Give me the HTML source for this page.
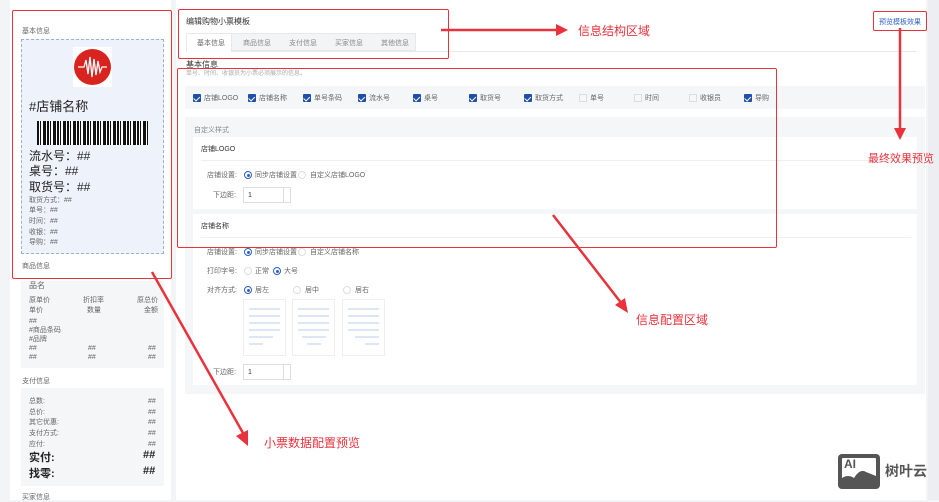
<!DOCTYPE html><html><head><meta charset="utf-8"><style>
*{margin:0;padding:0;box-sizing:border-box}
body{width:939px;height:500px;overflow:hidden;background:#f3f4f6;font-family:"Liberation Sans","Noto Sans CJK SC",sans-serif;position:relative;color:#333}
.a{position:absolute;white-space:nowrap}
.s7{font-size:7px;color:#666;line-height:9px}
.cb{position:absolute;width:8px;height:8px;background:#1f4fa8;border-radius:1px}
.cb::after{content:"";position:absolute;left:2px;top:0.5px;width:2.5px;height:4.5px;border:solid #fff;border-width:0 1.2px 1.2px 0;transform:rotate(45deg)}
.cbg{position:absolute;width:8px;height:8px;border:1px solid #ddd;background:#f7f7f7}
.rd{position:absolute;width:8px;height:8px;border-radius:50%;border:1px solid #2d5fc4}
.rd::after{content:"";position:absolute;left:1.5px;top:1.5px;width:3px;height:3px;border-radius:50%;background:#2d5fc4}
.ro{position:absolute;width:8px;height:8px;border-radius:50%;border:1px solid #ddd}
.red{position:absolute;border:1.5px solid #e8323c;border-radius:2px}
.rt{position:absolute;color:#e8323c;font-size:12px;white-space:nowrap}
.inp{position:absolute;width:48px;height:16px;border:1px solid #ddd;background:#fff;font-size:7px;padding:4px 0 0 4px}
.inp::after{content:"";position:absolute;right:0;top:0;width:6px;height:14px;border-left:1px solid #ddd}
.al{position:absolute;width:43px;height:57px;border:1px solid #eceef2;background:#fff}
.al i{position:absolute;height:2px;background:#dde6f5}
</style></head><body>
<div class="a" style="left:10px;top:0;width:161px;height:500px;background:#fff"></div>
<div class="a s7" style="left:22px;top:27px">基本信息</div>
<div class="a" style="left:21px;top:39px;width:143px;height:215px;background:#eef2fa;border:1px dashed #9bb0d4"></div>
<div class="a" style="left:73px;top:47px;width:39px;height:40px;background:#fff"></div>
<div class="a" style="left:74px;top:49px;width:37px;height:36px;border-radius:50%;background:#d8231f"></div>
<svg class="a" style="left:76px;top:54px" width="33" height="26"><path d="M2 13 L8 13 L10 6 L12 20 L14 3 L16 23 L18 5 L20 21 L22 7 L24 18 L26 13 L31 13" stroke="#fff" stroke-width="1.3" fill="none"/></svg>
<div class="a" style="left:29px;top:96px;font-size:13px;color:#222">#店铺名称</div>
<div class="a" style="left:37px;top:121px;width:111px;height:24px;background:repeating-linear-gradient(90deg,#111 0 2px,#fff 2px 3px,#111 3px 4px,#fff 4px 6px,#111 6px 9px,#fff 9px 10px)"></div>
<div class="a" style="left:29px;top:147px;font-size:12px;color:#222">流水号：##</div>
<div class="a" style="left:29px;top:162px;font-size:12px;color:#222">桌号：##</div>
<div class="a" style="left:29px;top:178px;font-size:12px;color:#222">取货号：##</div>
<div class="a s7" style="left:29px;top:196px">取货方式：##</div>
<div class="a s7" style="left:29px;top:206px">单号：##</div>
<div class="a s7" style="left:29px;top:217px">时间：##</div>
<div class="a s7" style="left:29px;top:228px">收银：##</div>
<div class="a s7" style="left:29px;top:238px">导购：##</div>
<div class="a s7" style="left:22px;top:262px">商品信息</div>
<div class="a" style="left:21px;top:281px;width:143px;height:87px;background:#f5f6f8"></div>
<div class="a s7" style="left:29px;top:281px;font-size:8px;line-height:10px">品名</div>
<div class="a s7" style="left:29px;top:296px">原单价</div><div class="a s7" style="left:83px;top:296px">折扣率</div><div class="a s7" style="left:137px;top:296px">原总价</div>
<div class="a s7" style="left:29px;top:306px">单价</div><div class="a s7" style="left:87px;top:306px">数量</div><div class="a s7" style="left:144px;top:306px">金额</div>
<div class="a s7" style="left:29px;top:317px">##</div>
<div class="a s7" style="left:29px;top:326px">#商品条码</div>
<div class="a s7" style="left:29px;top:335px">#品牌</div>
<div class="a s7" style="left:29px;top:344px">##</div><div class="a s7" style="left:88px;top:344px">##</div><div class="a s7" style="left:148px;top:344px">##</div>
<div class="a s7" style="left:29px;top:353px">##</div><div class="a s7" style="left:88px;top:353px">##</div><div class="a s7" style="left:148px;top:353px">##</div>
<div class="a s7" style="left:22px;top:377px">支付信息</div>
<div class="a" style="left:21px;top:388px;width:143px;height:98px;background:#f5f6f8"></div>
<div class="a s7" style="left:29px;top:397px">总数:</div><div class="a s7" style="left:148px;top:397px">##</div>
<div class="a s7" style="left:29px;top:408px">总价:</div><div class="a s7" style="left:148px;top:408px">##</div>
<div class="a s7" style="left:29px;top:418px">其它优惠:</div><div class="a s7" style="left:148px;top:418px">##</div>
<div class="a s7" style="left:29px;top:429px">支付方式:</div><div class="a s7" style="left:148px;top:429px">##</div>
<div class="a s7" style="left:29px;top:440px">应付:</div><div class="a s7" style="left:148px;top:440px">##</div>
<div class="a" style="left:29px;top:449px;font-size:11px;font-weight:bold;color:#222">实付:</div><div class="a" style="left:143px;top:449px;font-size:11px;font-weight:bold;color:#222">##</div>
<div class="a" style="left:29px;top:465px;font-size:11px;font-weight:bold;color:#222">找零:</div><div class="a" style="left:143px;top:465px;font-size:11px;font-weight:bold;color:#222">##</div>
<div class="a s7" style="left:22px;top:493px">买家信息</div>
<div class="a" style="left:176px;top:0;width:750px;height:500px;background:#fff"></div>
<div class="a" style="left:928px;top:0;width:11px;height:500px;background:#eceef1"></div>
<div class="a" style="left:186px;top:16px;font-size:8px;color:#333">编辑购物小票模板</div>
<div class="a" style="left:186px;top:51px;width:730px;height:1px;background:#e8e8e8"></div>
<div class="a" style="left:186px;top:33px;width:230px;height:18px;background:#f3f4f6;border:1px solid #e8e8e8"></div>
<div class="a" style="left:186px;top:33px;width:46px;height:19px;background:#fff;border:1px solid #e8e8e8;border-bottom:none"></div>
<div class="a s7" style="left:197px;top:39px">基本信息</div>
<div class="a s7" style="left:243px;top:39px;color:#888">商品信息</div>
<div class="a s7" style="left:289px;top:39px;color:#888">支付信息</div>
<div class="a s7" style="left:335px;top:39px;color:#888">买家信息</div>
<div class="a s7" style="left:381px;top:39px;color:#888">其他信息</div>
<div class="a" style="left:873px;top:11px;width:54px;height:20px;border:1.5px solid #e8323c;border-radius:2px;font-size:7px;color:#2d5fc4;text-align:center;padding-top:5px">预览模板效果</div>
<div class="a" style="left:186px;top:59px;font-size:8px;color:#333">基本信息</div>
<div class="a s7" style="left:186px;top:70px;font-size:6px;color:#aaa">单号、时间、收银员为小票必须展示的信息。</div>
<div class="a" style="left:185px;top:86px;width:740px;height:23px;background:#f5f6f8"></div>
<div class="cb" style="left:193px;top:94px"></div><div class="a s7" style="left:204px;top:94px">店铺LOGO</div>
<div class="cb" style="left:248px;top:94px"></div><div class="a s7" style="left:259px;top:94px">店铺名称</div>
<div class="cb" style="left:303px;top:94px"></div><div class="a s7" style="left:314px;top:94px">单号条码</div>
<div class="cb" style="left:358px;top:94px"></div><div class="a s7" style="left:369px;top:94px">流水号</div>
<div class="cb" style="left:413px;top:94px"></div><div class="a s7" style="left:424px;top:94px">桌号</div>
<div class="cb" style="left:469px;top:94px"></div><div class="a s7" style="left:480px;top:94px">取货号</div>
<div class="cb" style="left:524px;top:94px"></div><div class="a s7" style="left:535px;top:94px">取货方式</div>
<div class="cbg" style="left:579px;top:94px"></div><div class="a s7" style="left:590px;top:94px">单号</div>
<div class="cbg" style="left:634px;top:94px"></div><div class="a s7" style="left:645px;top:94px">时间</div>
<div class="cbg" style="left:689px;top:94px"></div><div class="a s7" style="left:700px;top:94px">收银员</div>
<div class="cb" style="left:744px;top:94px"></div><div class="a s7" style="left:755px;top:94px">导购</div>
<div class="a" style="left:185px;top:117px;width:740px;height:277px;background:#f5f6f8"></div>
<div class="a s7" style="left:194px;top:126px;color:#888">自定义样式</div>
<div class="a" style="left:193px;top:137px;width:724px;height:72px;background:#fff"></div>
<div class="a s7" style="left:201px;top:145px;color:#333">店铺LOGO</div>
<div class="a" style="left:201px;top:160px;width:710px;height:1px;background:#eee"></div>
<div class="a s7" style="left:207px;top:171px">店铺设置:</div>
<div class="rd" style="left:244px;top:171px"></div><div class="a s7" style="left:255px;top:171px">同步店铺设置</div>
<div class="ro" style="left:298px;top:171px"></div><div class="a s7" style="left:310px;top:171px">自定义店铺LOGO</div>
<div class="a s7" style="left:213px;top:191px">下边距:</div>
<div class="inp" style="left:243px;top:187px">1</div>
<div class="a" style="left:193px;top:214px;width:724px;height:171px;background:#fff"></div>
<div class="a s7" style="left:201px;top:222px;color:#333">店铺名称</div>
<div class="a" style="left:201px;top:237px;width:710px;height:1px;background:#eee"></div>
<div class="a s7" style="left:207px;top:248px">店铺设置:</div>
<div class="rd" style="left:244px;top:248px"></div><div class="a s7" style="left:255px;top:248px">同步店铺设置</div>
<div class="ro" style="left:298px;top:248px"></div><div class="a s7" style="left:310px;top:248px">自定义店铺名称</div>
<div class="a s7" style="left:207px;top:267px">打印字号:</div>
<div class="ro" style="left:244px;top:267px"></div><div class="a s7" style="left:255px;top:267px">正常</div>
<div class="rd" style="left:273px;top:267px"></div><div class="a s7" style="left:284px;top:267px">大号</div>
<div class="a s7" style="left:207px;top:286px">对齐方式:</div>
<div class="rd" style="left:244px;top:286px"></div><div class="a s7" style="left:255px;top:286px">居左</div>
<div class="ro" style="left:293px;top:286px"></div><div class="a s7" style="left:305px;top:286px">居中</div>
<div class="ro" style="left:343px;top:286px"></div><div class="a s7" style="left:355px;top:286px">居右</div>
<div class="al" style="left:243px;top:299px"><i style="left:5px;top:8px;width:31px"></i><i style="left:5px;top:15px;width:31px"></i><i style="left:5px;top:22px;width:31px"></i><i style="left:5px;top:29px;width:31px"></i><i style="left:5px;top:36px;width:24px"></i><i style="left:5px;top:43px;width:14px"></i></div>
<div class="al" style="left:292px;top:299px"><i style="left:5px;top:8px;width:31px"></i><i style="left:5px;top:15px;width:31px"></i><i style="left:5px;top:22px;width:31px"></i><i style="left:5px;top:29px;width:31px"></i><i style="left:9px;top:36px;width:24px"></i><i style="left:14px;top:43px;width:14px"></i></div>
<div class="al" style="left:342px;top:299px"><i style="left:5px;top:8px;width:31px"></i><i style="left:5px;top:15px;width:31px"></i><i style="left:5px;top:22px;width:31px"></i><i style="left:5px;top:29px;width:31px"></i><i style="left:12px;top:36px;width:24px"></i><i style="left:22px;top:43px;width:14px"></i></div>
<div class="a s7" style="left:213px;top:368px">下边距:</div>
<div class="inp" style="left:243px;top:364px">1</div>
<div class="red" style="left:12px;top:10px;width:160px;height:269px"></div>
<div class="red" style="left:178px;top:9px;width:271px;height:50px"></div>
<div class="red" style="left:177px;top:68px;width:600px;height:180px"></div>
<svg class="a" style="left:0;top:0" width="939" height="500">
<g stroke="#e8323c" stroke-width="2.5" fill="#e8323c">
<line x1="441" y1="30" x2="560" y2="30"/><polygon points="568,30 556,24 556,36" stroke="none"/>
<line x1="900" y1="28" x2="900" y2="130"/><polygon points="900,140 894,128 906,128" stroke="none"/>
<line x1="553" y1="215" x2="622" y2="304"/><polygon points="628,313 615,305 625,298" stroke="none"/>
<line x1="152" y1="272" x2="243" y2="433"/><polygon points="248,446 236,436 248,430" stroke="none"/>
</g></svg>
<div class="rt" style="left:578px;top:22px">信息结构区域</div>
<div class="rt" style="left:868px;top:150px;font-size:11px">最终效果预览</div>
<div class="rt" style="left:636px;top:311px">信息配置区域</div>
<div class="rt" style="left:264px;top:434px">小票数据配置预览</div>
<div class="a" style="left:838px;top:454px;width:42px;height:35px;background:#555;border-radius:4px"></div>
<div class="a" style="left:842px;top:458px;width:34px;height:24px;background:#fff;border-radius:1px"></div>
<div class="a" style="left:844px;top:457px;font-size:12px;font-weight:bold;color:#555;line-height:15px">AI</div>
<svg class="a" style="left:842px;top:464px" width="34" height="18"><path d="M0 18 L0 14 Q6 10 12 14 Q18 4 24 8 L34 12 L34 18Z" fill="#555"/></svg>
<div class="a" style="left:885px;top:461px;font-size:14px;font-weight:bold;color:#555">树叶云</div>
</body></html>
